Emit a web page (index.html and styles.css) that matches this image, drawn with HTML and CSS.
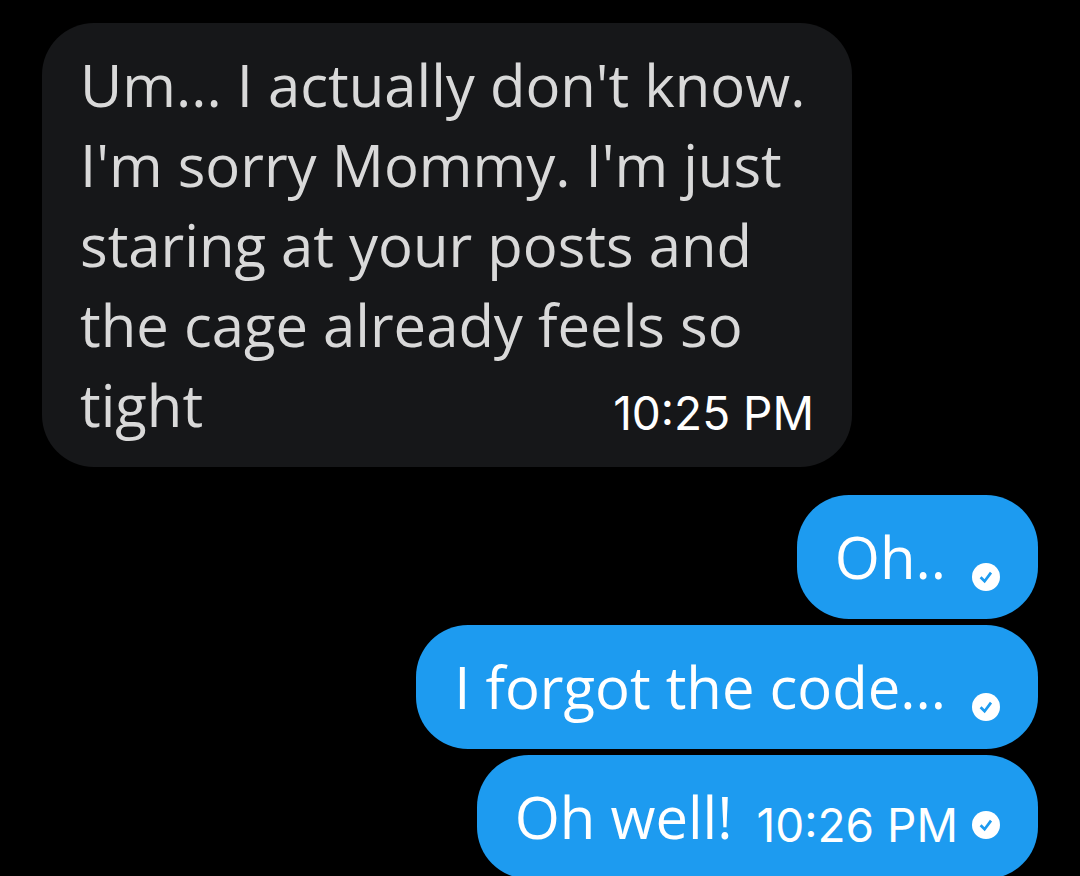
FILE: index.html
```html
<!DOCTYPE html>
<html lang="en">
<head>
  <meta charset="UTF-8">
  <meta name="viewport" content="width=device-width, initial-scale=1">
  <title>Messages</title>
  <link rel="stylesheet" href="styles.css">
</head>
<body>

<main class="chat">
  <div class="bubble received">
    <p>Um... I actually don't know. I'm sorry Mommy. I'm just staring at your posts and the cage already feels so tight <time class="time">10:25 PM</time></p>
  </div>

  <div class="bubble sent">
    <p>Oh..</p>
    <svg class="check" viewBox="0 0 28 28" role="img" aria-label="Sent">
      <circle cx="14" cy="14" r="14" fill="#fff"/>
      <path d="M8.6 14.2l4 4 6.4-8.6" fill="none" stroke="#1d9bf0" stroke-width="2.7"/>
    </svg>
  </div>

  <div class="bubble sent">
    <p>I forgot the code...</p>
    <svg class="check" viewBox="0 0 28 28" role="img" aria-label="Sent">
      <circle cx="14" cy="14" r="14" fill="#fff"/>
      <path d="M8.6 14.2l4 4 6.4-8.6" fill="none" stroke="#1d9bf0" stroke-width="2.7"/>
    </svg>
  </div>

  <div class="bubble sent">
    <p>Oh well!</p>
    <div class="meta">
      <time class="time">10:26 PM</time>
      <svg class="check" viewBox="0 0 28 28" role="img" aria-label="Sent">
        <circle cx="14" cy="14" r="14" fill="#fff"/>
        <path d="M8.6 14.2l4 4 6.4-8.6" fill="none" stroke="#1d9bf0" stroke-width="2.7"/>
      </svg>
    </div>
  </div>
</main>

</body>
</html>
```
FILE: styles.css
```css
body {
  margin: 0;
  background: #000;
  font-family: "Open Sans", "Noto Sans", sans-serif;
}

.chat {
  display: flex;
  flex-direction: column;
  gap: 6px;
  padding: 23px 42px 0;
}

.bubble {
  box-sizing: border-box;
  padding: 22px 38px;
  border-radius: 52px;
  color: #fff;
}

.bubble p {
  margin: 0;
  font-size: 58px;
  font-weight: 430;
  line-height: 80px;
}

.received {
  align-self: flex-start;
  max-width: 810px;
  margin-bottom: 22px;
  background: #161719;
}

.received p {
  color: #d9d9d9;
}

/* the time shares the last line of the message */
.received .time {
  float: right;
  margin-top: 16px;
}

.sent {
  display: flex;
  align-items: flex-end;
  align-self: flex-end;
  background: #1d9bf0;
}

.time {
  font-family: Inter, sans-serif;
  font-size: 46px;
  font-weight: 400;
  line-height: 64px;
  color: #fff;
}

.meta {
  display: flex;
  align-items: center;
  margin-left: 24px;
}

.check {
  width: 28px;
  height: 28px;
  margin: 0 0 6px 26px;
}

.meta .check {
  margin: 0 0 0 14px;
}
```
